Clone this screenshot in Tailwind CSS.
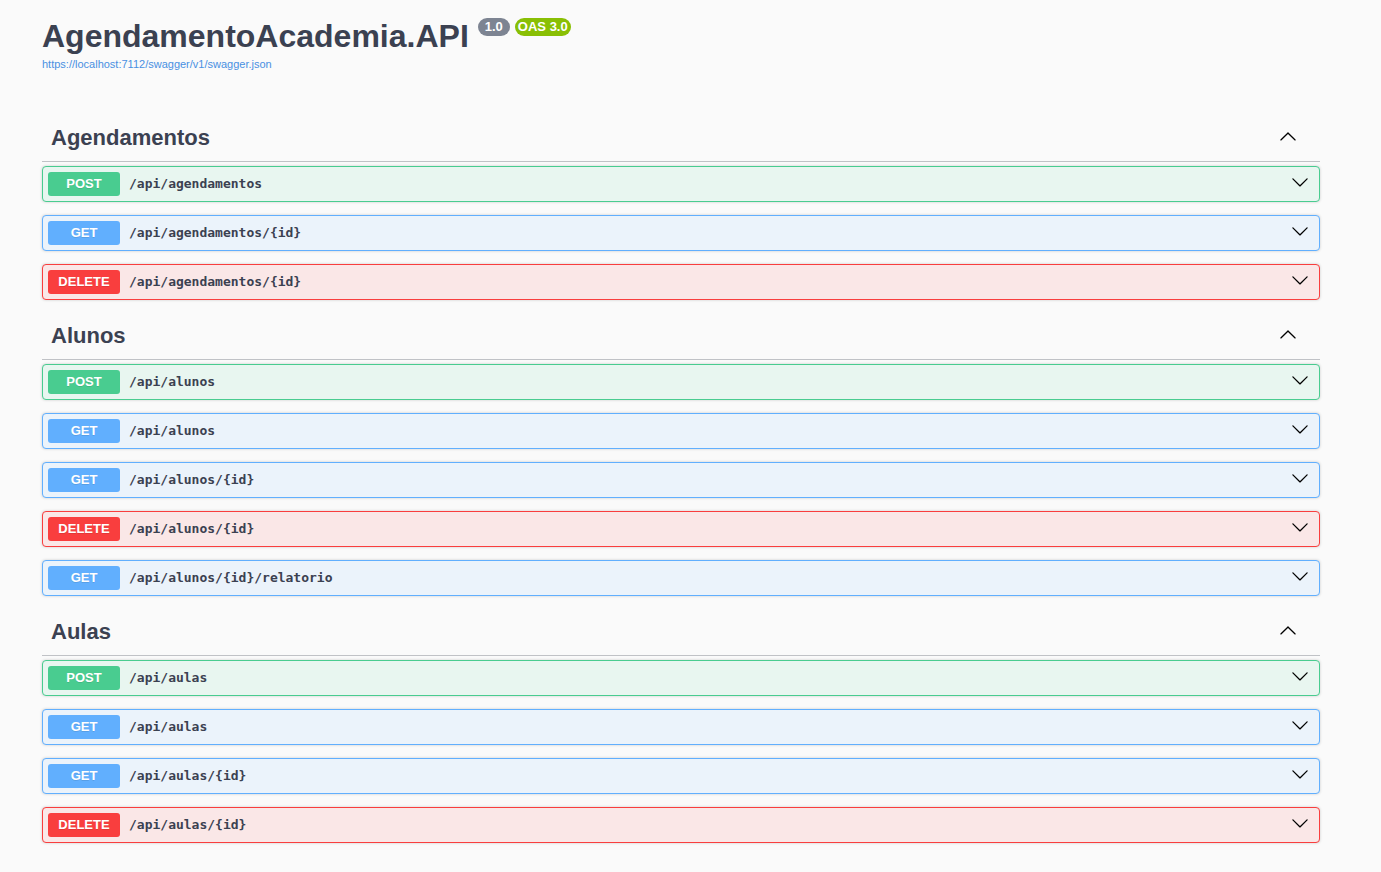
<!DOCTYPE html>
<html lang="pt-BR">
<head>
<meta charset="utf-8">
<meta name="viewport" content="width=device-width, initial-scale=1">
<title>Swagger UI</title>
<script src="https://cdn.jsdelivr.net/npm/@tailwindcss/browser@4"></script>
</head>
<body class="min-h-screen bg-[#fafafa] font-['Liberation_Sans',Arial,sans-serif] text-[#3b4151]">
<svg class="hidden" aria-hidden="true">
  <symbol id="down" viewBox="0 0 20 20"><path d="M17.418 6.109c.272-.268.709-.268.979 0s.271.701 0 .969l-7.908 7.83c-.27.268-.707.268-.979 0l-7.908-7.83c-.27-.268-.271-.701 0-.969s.709-.268.979 0L10 13.25z"/></symbol>
  <symbol id="up" viewBox="0 0 20 20"><path d="M17.418 14.908c.272.268.709.268.979 0s.271-.701 0-.969l-7.908-7.83c-.27-.268-.707-.268-.979 0l-7.908 7.83c-.27.268-.271.701 0 .969s.709.268.979 0L10 7.767z"/></symbol>
</svg>
<main class="flex flex-col pt-4 pr-[61px] pb-4 pl-[42px]">
  <header class="flex flex-col items-start pb-[42px]">
    <div class="flex items-start gap-[9px]">
      <h1 class="text-[32px] leading-10 font-bold">AgendamentoAcademia.API</h1>
      <div class="flex gap-[5px] pt-0.5 text-[13px] leading-[18px] font-bold text-white">
        <span class="rounded-full bg-[#7d8492] px-[7px]">1.0</span>
        <span class="rounded-full bg-[#89bf04] px-[3px]">OAS 3.0</span>
      </div>
    </div>
    <a href="https://localhost:7112/swagger/v1/swagger.json" class="text-[11px] leading-[17px] text-[#4990e2]">https://localhost:7112/swagger/v1/swagger.json</a>
  </header>

  <section class="flex flex-col gap-1 pb-[13px]">
    <h2 class="border-b border-[#3b4151]/30"><button class="flex h-[46px] w-full items-center justify-between pr-[23px] pb-0.5 pl-[9px] text-left text-[22px] font-bold">Agendamentos<svg class="mb-0.5 size-[18px] fill-black" aria-hidden="true"><use href="#up"/></svg></button></h2>
    <div class="flex flex-col gap-[13px]">
      <button class="flex h-9 items-center rounded-[4px] border border-[#49cc90] bg-[#e8f6f0] px-[5px] text-left shadow-[0_0_3px_rgba(0,0,0,0.19)]"><span class="w-[72px] rounded-[3px] bg-[#49cc90] pb-px text-center text-[13px] leading-[23px] font-bold text-white text-shadow-[0_1px_0_rgba(0,0,0,0.1)]">POST</span><span class="grow pl-[9px] font-['DejaVu_Sans_Mono',monospace] text-[13px] font-bold">/api/agendamentos</span><svg class="mr-[5px] mb-1 size-[18px] fill-black" aria-hidden="true"><use href="#down"/></svg></button>
      <button class="flex h-9 items-center rounded-[4px] border border-[#61affe] bg-[#ebf3fb] px-[5px] text-left shadow-[0_0_3px_rgba(0,0,0,0.19)]"><span class="w-[72px] rounded-[3px] bg-[#61affe] pb-px text-center text-[13px] leading-[23px] font-bold text-white text-shadow-[0_1px_0_rgba(0,0,0,0.1)]">GET</span><span class="grow pl-[9px] font-['DejaVu_Sans_Mono',monospace] text-[13px] font-bold">/api/agendamentos/{id}</span><svg class="mr-[5px] mb-1 size-[18px] fill-black" aria-hidden="true"><use href="#down"/></svg></button>
      <button class="flex h-9 items-center rounded-[4px] border border-[#f93e3e] bg-[#fae7e7] px-[5px] text-left shadow-[0_0_3px_rgba(0,0,0,0.19)]"><span class="w-[72px] rounded-[3px] bg-[#f93e3e] pb-px text-center text-[13px] leading-[23px] font-bold text-white text-shadow-[0_1px_0_rgba(0,0,0,0.1)]">DELETE</span><span class="grow pl-[9px] font-['DejaVu_Sans_Mono',monospace] text-[13px] font-bold">/api/agendamentos/{id}</span><svg class="mr-[5px] mb-1 size-[18px] fill-black" aria-hidden="true"><use href="#down"/></svg></button>
    </div>
  </section>

  <section class="flex flex-col gap-1 pb-[13px]">
    <h2 class="border-b border-[#3b4151]/30"><button class="flex h-[46px] w-full items-center justify-between pr-[23px] pb-0.5 pl-[9px] text-left text-[22px] font-bold">Alunos<svg class="mb-0.5 size-[18px] fill-black" aria-hidden="true"><use href="#up"/></svg></button></h2>
    <div class="flex flex-col gap-[13px]">
      <button class="flex h-9 items-center rounded-[4px] border border-[#49cc90] bg-[#e8f6f0] px-[5px] text-left shadow-[0_0_3px_rgba(0,0,0,0.19)]"><span class="w-[72px] rounded-[3px] bg-[#49cc90] pb-px text-center text-[13px] leading-[23px] font-bold text-white text-shadow-[0_1px_0_rgba(0,0,0,0.1)]">POST</span><span class="grow pl-[9px] font-['DejaVu_Sans_Mono',monospace] text-[13px] font-bold">/api/alunos</span><svg class="mr-[5px] mb-1 size-[18px] fill-black" aria-hidden="true"><use href="#down"/></svg></button>
      <button class="flex h-9 items-center rounded-[4px] border border-[#61affe] bg-[#ebf3fb] px-[5px] text-left shadow-[0_0_3px_rgba(0,0,0,0.19)]"><span class="w-[72px] rounded-[3px] bg-[#61affe] pb-px text-center text-[13px] leading-[23px] font-bold text-white text-shadow-[0_1px_0_rgba(0,0,0,0.1)]">GET</span><span class="grow pl-[9px] font-['DejaVu_Sans_Mono',monospace] text-[13px] font-bold">/api/alunos</span><svg class="mr-[5px] mb-1 size-[18px] fill-black" aria-hidden="true"><use href="#down"/></svg></button>
      <button class="flex h-9 items-center rounded-[4px] border border-[#61affe] bg-[#ebf3fb] px-[5px] text-left shadow-[0_0_3px_rgba(0,0,0,0.19)]"><span class="w-[72px] rounded-[3px] bg-[#61affe] pb-px text-center text-[13px] leading-[23px] font-bold text-white text-shadow-[0_1px_0_rgba(0,0,0,0.1)]">GET</span><span class="grow pl-[9px] font-['DejaVu_Sans_Mono',monospace] text-[13px] font-bold">/api/alunos/{id}</span><svg class="mr-[5px] mb-1 size-[18px] fill-black" aria-hidden="true"><use href="#down"/></svg></button>
      <button class="flex h-9 items-center rounded-[4px] border border-[#f93e3e] bg-[#fae7e7] px-[5px] text-left shadow-[0_0_3px_rgba(0,0,0,0.19)]"><span class="w-[72px] rounded-[3px] bg-[#f93e3e] pb-px text-center text-[13px] leading-[23px] font-bold text-white text-shadow-[0_1px_0_rgba(0,0,0,0.1)]">DELETE</span><span class="grow pl-[9px] font-['DejaVu_Sans_Mono',monospace] text-[13px] font-bold">/api/alunos/{id}</span><svg class="mr-[5px] mb-1 size-[18px] fill-black" aria-hidden="true"><use href="#down"/></svg></button>
      <button class="flex h-9 items-center rounded-[4px] border border-[#61affe] bg-[#ebf3fb] px-[5px] text-left shadow-[0_0_3px_rgba(0,0,0,0.19)]"><span class="w-[72px] rounded-[3px] bg-[#61affe] pb-px text-center text-[13px] leading-[23px] font-bold text-white text-shadow-[0_1px_0_rgba(0,0,0,0.1)]">GET</span><span class="grow pl-[9px] font-['DejaVu_Sans_Mono',monospace] text-[13px] font-bold">/api/alunos/{id}/relatorio</span><svg class="mr-[5px] mb-1 size-[18px] fill-black" aria-hidden="true"><use href="#down"/></svg></button>
    </div>
  </section>

  <section class="flex flex-col gap-1 pb-[13px]">
    <h2 class="border-b border-[#3b4151]/30"><button class="flex h-[46px] w-full items-center justify-between pr-[23px] pb-0.5 pl-[9px] text-left text-[22px] font-bold">Aulas<svg class="mb-0.5 size-[18px] fill-black" aria-hidden="true"><use href="#up"/></svg></button></h2>
    <div class="flex flex-col gap-[13px]">
      <button class="flex h-9 items-center rounded-[4px] border border-[#49cc90] bg-[#e8f6f0] px-[5px] text-left shadow-[0_0_3px_rgba(0,0,0,0.19)]"><span class="w-[72px] rounded-[3px] bg-[#49cc90] pb-px text-center text-[13px] leading-[23px] font-bold text-white text-shadow-[0_1px_0_rgba(0,0,0,0.1)]">POST</span><span class="grow pl-[9px] font-['DejaVu_Sans_Mono',monospace] text-[13px] font-bold">/api/aulas</span><svg class="mr-[5px] mb-1 size-[18px] fill-black" aria-hidden="true"><use href="#down"/></svg></button>
      <button class="flex h-9 items-center rounded-[4px] border border-[#61affe] bg-[#ebf3fb] px-[5px] text-left shadow-[0_0_3px_rgba(0,0,0,0.19)]"><span class="w-[72px] rounded-[3px] bg-[#61affe] pb-px text-center text-[13px] leading-[23px] font-bold text-white text-shadow-[0_1px_0_rgba(0,0,0,0.1)]">GET</span><span class="grow pl-[9px] font-['DejaVu_Sans_Mono',monospace] text-[13px] font-bold">/api/aulas</span><svg class="mr-[5px] mb-1 size-[18px] fill-black" aria-hidden="true"><use href="#down"/></svg></button>
      <button class="flex h-9 items-center rounded-[4px] border border-[#61affe] bg-[#ebf3fb] px-[5px] text-left shadow-[0_0_3px_rgba(0,0,0,0.19)]"><span class="w-[72px] rounded-[3px] bg-[#61affe] pb-px text-center text-[13px] leading-[23px] font-bold text-white text-shadow-[0_1px_0_rgba(0,0,0,0.1)]">GET</span><span class="grow pl-[9px] font-['DejaVu_Sans_Mono',monospace] text-[13px] font-bold">/api/aulas/{id}</span><svg class="mr-[5px] mb-1 size-[18px] fill-black" aria-hidden="true"><use href="#down"/></svg></button>
      <button class="flex h-9 items-center rounded-[4px] border border-[#f93e3e] bg-[#fae7e7] px-[5px] text-left shadow-[0_0_3px_rgba(0,0,0,0.19)]"><span class="w-[72px] rounded-[3px] bg-[#f93e3e] pb-px text-center text-[13px] leading-[23px] font-bold text-white text-shadow-[0_1px_0_rgba(0,0,0,0.1)]">DELETE</span><span class="grow pl-[9px] font-['DejaVu_Sans_Mono',monospace] text-[13px] font-bold">/api/aulas/{id}</span><svg class="mr-[5px] mb-1 size-[18px] fill-black" aria-hidden="true"><use href="#down"/></svg></button>
    </div>
  </section>
</main>
</body>
</html>
